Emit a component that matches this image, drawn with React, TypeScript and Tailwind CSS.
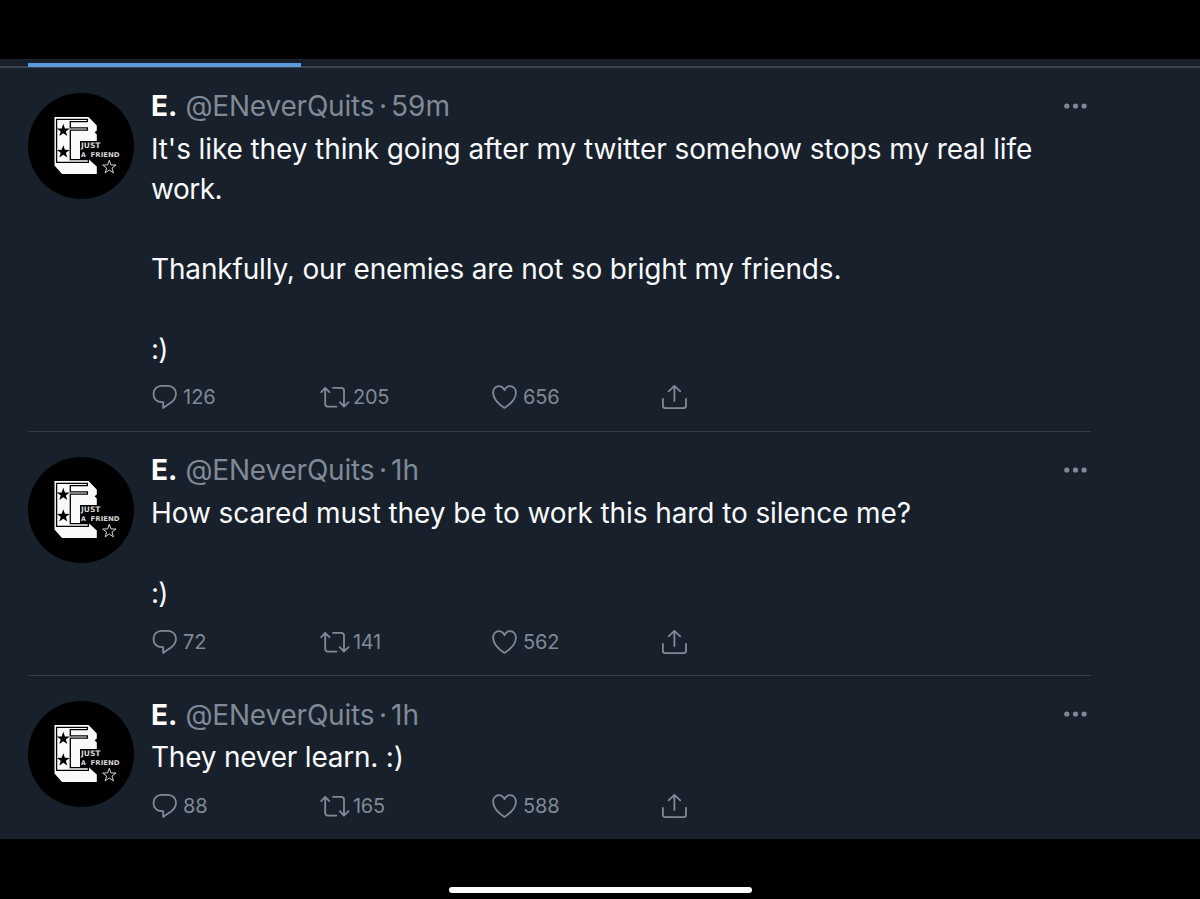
import React from "react";

type Line = { text: string; tracking: string };
type Tweet = {
  time: string;
  lines: Line[];
  replies: string;
  retweets: string;
  likes: string;
};

const tweets: Tweet[] = [
  {
    time: "59m",
    lines: [
      { text: "It's like they think going after my twitter somehow stops my real life", tracking: "tracking-[-0.108px]" },
      { text: "work.", tracking: "tracking-[-0.5px]" },
      { text: "", tracking: "" },
      { text: "Thankfully, our enemies are not so bright my friends.", tracking: "tracking-[-0.158px]" },
      { text: "", tracking: "" },
      { text: ":)", tracking: "tracking-[-0.8px]" },
    ],
    replies: "126",
    retweets: "205",
    likes: "656",
  },
  {
    time: "1h",
    lines: [
      { text: "How scared must they be to work this hard to silence me?", tracking: "tracking-[-0.09px]" },
      { text: "", tracking: "" },
      { text: ":)", tracking: "tracking-[-0.8px]" },
    ],
    replies: "72",
    retweets: "141",
    likes: "562",
  },
  {
    time: "1h",
    lines: [{ text: "They never learn. :)", tracking: "tracking-[-0.22px]" }],
    replies: "88",
    retweets: "165",
    likes: "588",
  },
];

const STAR = "M0 -1 L.235 -.324 L.951 -.309 L.38 .124 L.588 .809 L0 .4 L-.588 .809 L-.38 .124 L-.951 -.309 L-.235 -.324 Z";

function Avatar() {
  return (
    <svg className="size-[106px] shrink-0" viewBox="0 0 106 106">
      <circle cx="53" cy="53" r="53" fill="#000" />
      <path
        fill="#fafafa"
        d="M26.5 24H60.6L68.8 32.5V37.5L66.6 39.3L68.8 41.5V48H52V66H60.6L68.8 73.5V81H34L26.5 72.5Z"
      />
      <path
        fill="none"
        stroke="#000"
        strokeWidth="1.3"
        d="M28.6 26.3H59.4V28.7H42.3V34.8H59.4V37.2H42.3V66.6H60.4V69.4H28.6Z"
      />
      <path fill="#000" transform="translate(35.3 37.6) scale(6.8)" d={STAR} />
      <path fill="#000" transform="translate(35.3 59) scale(6.8)" d={STAR} />
      <path
        fill="none"
        stroke="#d8d8d8"
        strokeWidth=".14"
        transform="translate(81.3 74.2) scale(7)"
        d={STAR}
      />
      <g fill="#d6d6d6" fontFamily="'DejaVu Sans', sans-serif" fontWeight="700">
        <text x="53" y="55.2" fontSize="7.6" textLength="19.5" lengthAdjust="spacingAndGlyphs">JUST</text>
        <text x="53" y="64.4" fontSize="6.6" textLength="4.8" lengthAdjust="spacingAndGlyphs">A</text>
        <text x="62.6" y="64.4" fontSize="6.6" textLength="29" lengthAdjust="spacingAndGlyphs">FRIEND</text>
      </g>
    </svg>
  );
}

function Icon({ d }: { d: string }) {
  return (
    <svg
      className="h-7 w-8 shrink-0"
      viewBox="0 0 32 28"
      fill="none"
      stroke="currentColor"
      strokeWidth="1.8"
      strokeLinecap="round"
      strokeLinejoin="round"
    >
      <path d={d} />
    </svg>
  );
}

const REPLY =
  "M10.6 2.8H17C21.6 2.8 25 6.3 25 10.6C25 14.2 23.2 17 20.4 19.2C18 21 15 22.9 12.2 24.9V19.1H10.6C5.9 19.1 2.5 15.6 2.5 10.9C2.5 6.2 5.9 2.8 10.6 2.8Z";
const RETWEET =
  "M2.2 9.2L6.2 4.9L10.4 9.2M6.2 5.2V20.8Q6.2 23.6 9 23.6H17.5M14 4.8H22.2Q25 4.8 25 7.6V23.2M20.8 19.2L25 23.5L29.6 19.2";
const HEART =
  "M13.5 7.2C12.2 4.4 10.2 3.1 7.9 3.1C4.6 3.1 2.1 6 2.1 9.6C2.1 15.4 7.2 21 13.5 24.9C19.8 21 24.9 15.4 24.9 9.6C24.9 6 22.4 3.1 19.1 3.1C16.8 3.1 14.8 4.4 13.5 7.2Z";
const SHARE =
  "M1.9 15.8V22.8Q1.9 25.1 4.2 25.1H22.7Q25 25.1 25 22.8V15.8M13.4 18V3.2M7.6 8.4L13.4 2.9L19.2 8.4";

function TweetRow({ tweet, last }: { tweet: Tweet; last: boolean }) {
  return (
    <article
      className={
        "ml-7 flex w-[1062.5px] pt-[25px] " + (last ? "" : "border-b border-[#343c47]")
      }
    >
      <Avatar />
      <div className="ml-[17px] min-w-0 flex-1">
        <header className="flex h-[27.4px] justify-between">
          <div className="flex items-center whitespace-nowrap text-[28px] leading-[27px] text-[#808a96]">
            <span className="w-[34.5px] font-bold text-white">E.</span>
            <span className="w-[189.5px] tracking-[-0.2px]">@ENeverQuits</span>
            <span className="w-[16px] text-center">·</span>
            <span>{tweet.time}</span>
          </div>
          <svg className="mt-[9.5px] mr-[3.5px] h-[6px] w-[23px]" viewBox="0 0 23 6" fill="#808a96">
            <circle cx="2.8" cy="3" r="2.6" />
            <circle cx="11.5" cy="3" r="2.6" />
            <circle cx="20.1" cy="3" r="2.6" />
          </svg>
        </header>
        <div className="mt-[8.6px] text-[28px] leading-[40px] text-[#f7f9fa]">
          {tweet.lines.map((line, i) => (
            <p key={i} className={"h-10 whitespace-nowrap " + line.tracking}>
              {line.text}
            </p>
          ))}
        </div>
        <footer className="mt-[14.4px] mb-[19.8px] flex h-7 items-center text-[20px] text-[#808a96]">
          <div className="flex w-[168px] items-center">
            <Icon d={REPLY} />
            <span>{tweet.replies}</span>
          </div>
          <div className="flex w-[172px] items-center">
            <Icon d={RETWEET} />
            <span className="ml-[2px] tracking-[-0.3px]">{tweet.retweets}</span>
          </div>
          <div className="flex w-[170px] items-center">
            <Icon d={HEART} />
            <span className="tracking-[-0.2px]">{tweet.likes}</span>
          </div>
          <Icon d={SHARE} />
        </footer>
      </div>
    </article>
  );
}

export default function App() {
  return (
    <div className="flex h-[899px] w-[1200px] flex-col overflow-hidden bg-black font-['Inter','Liberation_Sans',sans-serif]">
      <div className="h-[59px] shrink-0" />
      <main className="h-[780px] shrink-0 overflow-hidden bg-[#18202b]">
        <div className="flex h-[9px] items-end border-b-2 border-[#3a424e]">
          <div className="-mb-[1px] ml-7 h-[4px] w-[273px] bg-[#5b9bdc]" />
        </div>
        {tweets.map((tweet, i) => (
          <TweetRow key={i} tweet={tweet} last={i === tweets.length - 1} />
        ))}
      </main>
      <div className="flex flex-1 items-end justify-center pb-[6px]">
        <div className="h-[6px] w-[303px] rounded-full bg-white" />
      </div>
    </div>
  );
}
